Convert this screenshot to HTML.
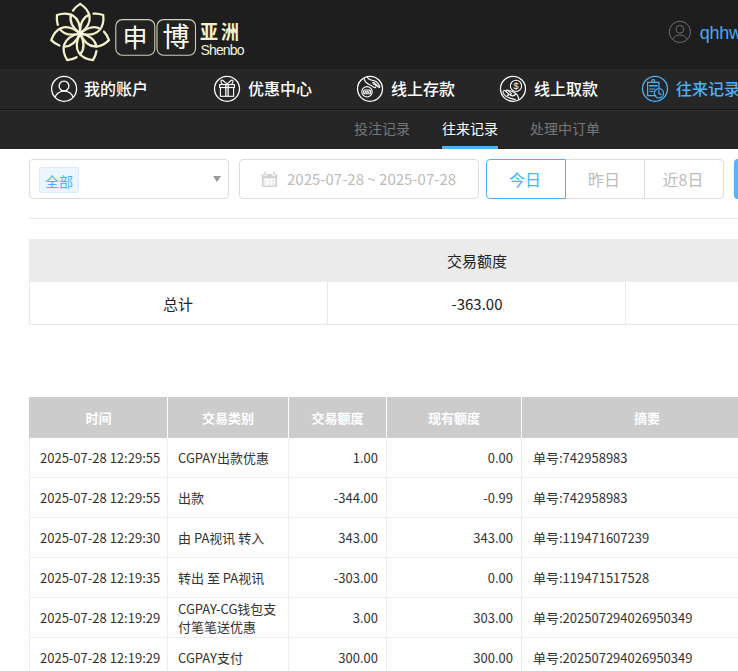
<!DOCTYPE html>
<html lang="zh-CN">
<head>
<meta charset="utf-8">
<title>往来记录</title>
<style>
*{box-sizing:border-box;margin:0;padding:0}
html,body{width:738px;height:671px;overflow:hidden;background:#fff}
body{font-family:"Noto Sans CJK SC","Liberation Sans",sans-serif;font-size:13px;color:#333;position:relative}
.abs{position:absolute}
#hdr{left:0;top:0;width:738px;height:69px;background:#1e1e1e}
#nav{left:0;top:69px;width:738px;height:41px;background:#262626;border-bottom:1px solid #111}
#sub{left:0;top:110px;width:738px;height:39px;background:#252525}
.navt{position:absolute;top:68px;height:40px;line-height:40px;font-size:16px;color:#fff;font-weight:500;white-space:nowrap}
.subt{position:absolute;top:109px;height:38px;line-height:38px;font-size:14px;color:#777;white-space:nowrap}

.box{position:absolute;top:159px;height:40px;border:1px solid #dcdcdc;border-radius:4px;background:#fff}
.tag{position:absolute;left:9px;top:7px;height:26px;width:40px;line-height:23px;padding-top:2px;text-align:center;font-size:14px;color:#4db1f5;background:#ecf5ff;border:1px solid #d9ecff;border-radius:2px}
.btn{position:absolute;top:159px;height:40px;line-height:38px;padding-right:2px;text-align:center;font-size:16px;color:#bbb;border:1px solid #dcdcdc;background:#fff}
.sumh{left:29px;top:239px;width:709px;height:43px;background:#ebebeb}
.cell{position:absolute;text-align:center;font-size:15px;color:#222;white-space:nowrap}
table{border-collapse:separate;border-spacing:0;position:absolute;left:29px;top:397px;table-layout:fixed;width:743px}
th{height:41px;background:#ccc;color:#fff;font-size:13px;font-weight:bold;border-left:1px solid #fff;text-align:center;padding:0}
th:first-child{border-left-color:#ccc}
td{height:40px;font-size:13px;color:#333;border-left:1px solid #eee;border-bottom:1px solid #eee;padding:1px 10px 0 10px;line-height:18px;white-space:nowrap}
td.r{text-align:right;padding-right:8px}
td.s{padding-left:11px}
</style>
</head>
<body>
<div id="hdr" class="abs"></div>
<div id="nav" class="abs"></div>
<div id="sub" class="abs"></div>
<div class="abs" style="left:0;top:110px;width:738px;height:1px;background:#343434"></div>


<svg class="abs" style="left:0;top:0" width="738" height="110" viewBox="0 0 738 110">
<defs>
<radialGradient id="glow"><stop offset="0" stop-color="#fff" stop-opacity="1"/><stop offset="0.5" stop-color="#fff" stop-opacity="0.7"/><stop offset="1" stop-color="#fff" stop-opacity="0"/></radialGradient>
</defs>
<g transform="translate(80.1,33.5)" fill="none" stroke="#f4f2c8" stroke-width="2.25" stroke-linecap="round"><path d="M0.00,0.00 C15.60,-11.80 9.60,-23.60 0.00,-29.60 M-0.00,0.00 C-8.74,-6.61 -10.70,-13.22 -9.05,-18.81 M-7.14,-22.86 C-5.39,-25.52 -2.86,-27.82 -0.00,-29.60" transform="rotate(0.000)"/><path d="M0.00,0.00 C15.60,-11.80 9.60,-23.60 0.00,-29.60 M-0.00,0.00 C-8.74,-6.61 -10.70,-13.22 -9.05,-18.81 M-7.14,-22.86 C-5.39,-25.52 -2.86,-27.82 -0.00,-29.60" transform="rotate(51.429)"/><path d="M0.00,0.00 C15.60,-11.80 9.60,-23.60 0.00,-29.60 M-0.00,0.00 C-8.74,-6.61 -10.70,-13.22 -9.05,-18.81 M-7.14,-22.86 C-5.39,-25.52 -2.86,-27.82 -0.00,-29.60" transform="rotate(102.857)"/><path d="M0.00,0.00 C15.60,-11.80 9.60,-23.60 0.00,-29.60 M-0.00,0.00 C-8.74,-6.61 -10.70,-13.22 -9.05,-18.81 M-7.14,-22.86 C-5.39,-25.52 -2.86,-27.82 -0.00,-29.60" transform="rotate(154.286)"/><path d="M0.00,0.00 C15.60,-11.80 9.60,-23.60 0.00,-29.60 M-0.00,0.00 C-8.74,-6.61 -10.70,-13.22 -9.05,-18.81 M-7.14,-22.86 C-5.39,-25.52 -2.86,-27.82 -0.00,-29.60" transform="rotate(205.714)"/><path d="M0.00,0.00 C15.60,-11.80 9.60,-23.60 0.00,-29.60 M-0.00,0.00 C-8.74,-6.61 -10.70,-13.22 -9.05,-18.81 M-7.14,-22.86 C-5.39,-25.52 -2.86,-27.82 -0.00,-29.60" transform="rotate(257.143)"/><path d="M0.00,0.00 C15.60,-11.80 9.60,-23.60 0.00,-29.60 M-0.00,0.00 C-8.74,-6.61 -10.70,-13.22 -9.05,-18.81 M-7.14,-22.86 C-5.39,-25.52 -2.86,-27.82 -0.00,-29.60" transform="rotate(308.571)"/></g>
<circle cx="80.1" cy="33.5" r="3.6" fill="url(#glow)" opacity="0.8"/>
<rect x="115.8" y="19.6" width="39" height="35.6" rx="6.5" fill="#222" stroke="#d0ceb4" stroke-width="1.1"/>
<rect x="157" y="19.6" width="38.5" height="35.6" rx="6.5" fill="#222" stroke="#d0ceb4" stroke-width="1.1"/>

<!-- top-right user -->
<g transform="translate(679.9,31.9)" fill="none" stroke="#6e6e6e" stroke-width="1">
<circle r="10.6"/><circle cy="-2.6" r="3.9"/><path d="M-7.2,7.6 A8,8 0 0 1 7.2,7.6"/>
</g>

<!-- account -->
<g transform="translate(64.1,88.8)" fill="none" stroke="#fff" stroke-width="1.3">
<circle r="12.5"/><circle cx="-0.1" cy="-2.8" r="4.9"/><path d="M-9.1,8.5 A9.8,9.8 0 0 1 9.1,8.5"/>
</g>
<!-- gift -->
<g transform="translate(227,88.8)" fill="none" stroke="#fff" stroke-width="1.1">
<circle r="12.5" stroke-width="1.3"/>
<rect x="-7.4" y="-4.2" width="14.8" height="2.9"/>
<rect x="-6.6" y="-1.3" width="13.2" height="8.8"/>
<path d="M-1.15,-4.2 V7.5 M1.15,-4.2 V7.5" stroke-width="1.3"/>
<path d="M0,-4.6 L-4,-8.3 C-5,-9.2 -6.4,-8.4 -6,-7.1 L-4.6,-4.4 M0,-4.6 L4,-8.3 C5,-9.2 6.4,-8.4 6,-7.1 L4.6,-4.4"/>
</g>
<!-- deposit -->
<g transform="translate(370,88.8)" fill="none" stroke="#fff" stroke-width="1.1" stroke-linecap="round" stroke-linejoin="round">
<circle r="12.5" stroke-width="1.3"/>
<circle cx="-3" cy="3" r="5.2"/>
<rect x="-6.3" y="1.2" width="6.8" height="3.8" rx="1"/>
<path d="M-5.2,4.4 L-4.3,2 L-3.4,4.4 L-2.5,2 L-1.6,4.4 L-0.7,2" stroke-width="0.9"/>
<path d="M-6,-10.4 C-5.4,-6.4 -2.6,-5 0.3,-3.9 C2,-3.2 3.2,-1.4 4.5,-1.1 C5.2,-1 5.6,-1.4 5.7,-1.8"/>
<path d="M-2.9,-11.9 C-1.2,-8.6 2.4,-8.6 5,-7.8 C7.4,-6.9 8.8,-4.4 9.8,-2 C9.9,-1.4 9.5,-1.1 9,-1.3 L6,-4.6"/>
<path d="M2.4,-6 L4,-6.4 L7.4,-2.2 M3.4,-4.6 L4.6,-4.9 L6,-3"/>
</g>
<!-- withdraw -->
<g transform="translate(513,88.8)" fill="none" stroke="#fff" stroke-width="1.1" stroke-linecap="round" stroke-linejoin="round">
<circle r="12.5" stroke-width="1.3"/>
<circle cx="3" cy="-2.9" r="5.6"/>
<text x="3" y="0.4" font-family="Liberation Sans, sans-serif" font-size="9" fill="#fff" stroke="none" text-anchor="middle" opacity="0.99">$</text>
<path d="M-9.9,2.6 C-9.4,1.4 -8.2,1.4 -7.4,2.2 L-4.4,5.2 C-3.8,6 -4.6,6.9 -5.6,6.4 M-7,2 C-6.4,1.1 -5.2,1.2 -4.4,2 L-2,4.6 C-1.4,5.4 -2.2,6.2 -3.2,5.8"/>
<path d="M-4.2,2 C-2.6,1.8 0,3 1.6,4 C4,5.4 5.4,7.6 5.8,10.6"/>
<path d="M-10,3.6 C-9,6.4 -6.4,8.4 -2.2,9.6 C-0.6,10 1,10.4 2.4,11 M-2.6,6.4 C-0.8,7.4 1.4,7 2.6,5.4"/>
</g>
<!-- records -->
<g transform="translate(655,88.8)" fill="none" stroke="#4db1f5" stroke-width="1.2" stroke-linecap="round">
<circle r="12.5" stroke-width="1.3"/>
<path d="M0.6,6.9 H-7.4 V-6.5 H3.9 V-0.6"/>
<circle cx="-1.8" cy="-7.6" r="1.5"/>
<path d="M-5.4,-3.1 H2" stroke-width="1.4"/><path d="M-5.4,0.2 H-0.4 M-5.4,2.6 H-1.8" stroke-width="1"/>
<circle cx="3.9" cy="4.5" r="4.6"/>
<path d="M3.9,1.6 V4.5 L6,5.8"/>
</g>
</svg>
<div class="abs" style="left:121px;top:17px;width:28px;height:38px;line-height:38px;text-align:center;font-size:25px;font-weight:400;color:#fffff4">申</div>
<div class="abs" style="left:162px;top:17px;width:28px;height:38px;line-height:38px;text-align:center;font-size:27px;font-weight:400;color:#fffff4">博</div>
<div class="abs" style="left:200px;top:19px;height:24px;line-height:24px;font-size:18px;font-weight:bold;color:#f4f2c8;letter-spacing:3px;white-space:nowrap;transform:scaleY(1.1);transform-origin:0 100%">亚洲</div>
<div class="abs" style="left:200.5px;top:42px;height:16px;line-height:16px;font-size:14px;letter-spacing:-0.85px;color:#f3f2dc;font-family:'Liberation Sans',sans-serif;white-space:nowrap">Shenbo</div>
<div class="abs" style="left:699.7px;top:21px;height:24px;line-height:24px;font-size:18px;letter-spacing:-0.25px;color:#47a9f7;transform:scaleY(1.06);transform-origin:0 74%;font-family:'Liberation Sans',sans-serif;white-space:nowrap">qhhw</div>

<div class="navt" style="left:84px">我的账户</div>
<div class="navt" style="left:248px">优惠中心</div>
<div class="navt" style="left:391px">线上存款</div>
<div class="navt" style="left:534px">线上取款</div>
<div class="navt" style="left:676px;color:#4db1f5">往来记录</div>

<div class="subt" style="left:354px">投注记录</div>
<div class="subt" style="left:442px;color:#fff">往来记录</div>
<div class="subt" style="left:530px">处理中订单</div>
<div class="abs" style="left:442px;top:146px;width:56px;height:3px;background:#4db1f5"></div>

<div class="box" style="left:29px;width:200px"><div class="tag">全部</div>
<div class="abs" style="left:183px;top:16px;width:0;height:0;border-left:4px solid transparent;border-right:4px solid transparent;border-top:6px solid #999"></div></div>
<div class="box" style="left:239px;width:240px">
<svg class="abs" style="left:21px;top:11px" width="17" height="17" viewBox="0 0 17 17"><rect x="0.7" y="2.9" width="15.5" height="13.2" rx="1.4" fill="#d3d3d3"/><rect x="2.6" y="7.5" width="11.7" height="7" fill="#fff"/><rect x="2.5" y="0" width="3.3" height="5.3" rx="1.2" fill="#fff"/><rect x="11.2" y="0" width="3.3" height="5.3" rx="1.2" fill="#fff"/><rect x="3.4" y="0.8" width="1.5" height="3.8" rx="0.7" fill="#d0d0d0"/><rect x="12.1" y="0.8" width="1.5" height="3.8" rx="0.7" fill="#d0d0d0"/><g fill="#cdcdcd"><rect x="3.6" y="9.3" width="1.4" height="1.4"/><rect x="7.8" y="9.3" width="1.4" height="1.4"/><rect x="11.4" y="9.3" width="1.4" height="1.4"/><rect x="3.6" y="12.3" width="1.4" height="1.4"/><rect x="7.8" y="12.3" width="1.4" height="1.4"/><rect x="11.4" y="12.3" width="1.4" height="1.4"/></g></svg>
<div class="abs" style="left:47px;top:0;line-height:38px;font-size:15px;color:#bbb;white-space:nowrap">2025-07-28 ~ 2025-07-28</div></div>
<div class="btn" style="left:565px;width:80px">昨日</div>
<div class="btn" style="left:644px;width:80px;border-radius:0 4px 4px 0">近8日</div>
<div class="btn" style="left:486px;width:80px;border-color:#4db1f5;color:#4db1f5;border-radius:4px 0 0 4px">今日</div>
<div class="abs" style="left:734px;top:159px;width:10px;height:40px;background:#54b4f9;border-radius:4px 0 0 4px"></div>
<div class="abs" style="left:29px;top:218px;width:709px;height:1px;background:#e8e8e8"></div>

<div class="abs sumh"></div>
<div class="cell" style="left:328px;width:298px;top:239px;line-height:43px">交易额度</div>
<div class="abs" style="left:29px;top:282px;width:299px;height:43px;border:1px solid #e8e8e8;border-top:0"></div>
<div class="abs" style="left:327px;top:282px;width:299px;height:43px;border:1px solid #e8e8e8;border-top:0"></div>
<div class="abs" style="left:625px;top:282px;width:299px;height:43px;border:1px solid #e8e8e8;border-top:0"></div>
<div class="cell" style="left:29px;width:298px;top:282px;line-height:43px">总计</div>
<div class="cell" style="left:328px;width:298px;top:282px;line-height:43px">-363.00</div>

<table>
<colgroup><col style="width:138px"><col style="width:121px"><col style="width:98px"><col style="width:135px"><col style="width:251px"></colgroup>
<tr><th>时间</th><th>交易类别</th><th>交易额度</th><th>现有额度</th><th>摘要</th></tr>
<tr><td>2025-07-28 12:29:55</td><td>CGPAY出款优惠</td><td class="r">1.00</td><td class="r">0.00</td><td class="s">单号:742958983</td></tr>
<tr><td>2025-07-28 12:29:55</td><td>出款</td><td class="r">-344.00</td><td class="r">-0.99</td><td class="s">单号:742958983</td></tr>
<tr><td>2025-07-28 12:29:30</td><td>由 PA视讯 转入</td><td class="r">343.00</td><td class="r">343.00</td><td class="s">单号:119471607239</td></tr>
<tr><td>2025-07-28 12:19:35</td><td>转出 至 PA视讯</td><td class="r">-303.00</td><td class="r">0.00</td><td class="s">单号:119471517528</td></tr>
<tr><td>2025-07-28 12:19:29</td><td style="white-space:normal">CGPAY-CG钱包支付笔笔送优惠</td><td class="r">3.00</td><td class="r">303.00</td><td class="s">单号:202507294026950349</td></tr>
<tr><td>2025-07-28 12:19:29</td><td>CGPAY支付</td><td class="r">300.00</td><td class="r">300.00</td><td class="s">单号:202507294026950349</td></tr>
</table>
</body>
</html>
